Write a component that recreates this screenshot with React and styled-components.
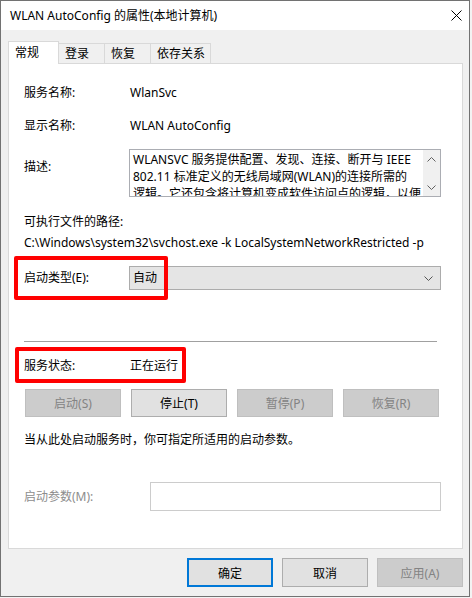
import React from "react";
import styled, { createGlobalStyle } from "styled-components";

const GlobalStyle = createGlobalStyle`
  html, body {
    margin: 0;
    padding: 0;
    background: #f3f3f3;
  }
  body {
    font-family: "Noto Sans", "Noto Sans CJK SC", sans-serif;
    font-size: 12px;
    color: #000;
  }
`;

const Window = styled.div`
  box-sizing: border-box;
  width: 470px;
  height: 597px;
  border: 1px solid #727272;
  background: #f0f0f0;
  display: flex;
  flex-direction: column;
`;

const TitleBar = styled.div`
  height: 29px;
  background: #fff;
  display: flex;
  align-items: center;
  justify-content: space-between;
  padding: 0 7px 0 9px;
`;

const Title = styled.span`
  font-size: 12px;
  line-height: 16px;
`;

const Body = styled.div`
  flex: 1;
  padding: 11px 6px 0 7px;
  display: flex;
  flex-direction: column;
`;

const TabStrip = styled.div`
  display: flex;
  align-items: flex-end;
  height: 22px;
`;

const Tab = styled.div`
  box-sizing: border-box;
  min-width: ${(p) => (p.$active ? "51px" : "47px")};
  height: ${(p) => (p.$active ? "23px" : "20px")};
  margin-bottom: ${(p) => (p.$active ? "-1px" : "0")};
  margin-left: ${(p) => (p.$first ? "0" : "-1px")};
  padding: ${(p) => (p.$active ? "3px 5px 0 6px" : "2px 5px 0 6px")};
  border: 1px solid #d9d9d9;
  border-bottom: none;
  background: ${(p) => (p.$active ? "#fff" : "#f0f0f0")};
  position: ${(p) => (p.$active ? "relative" : "static")};
  z-index: ${(p) => (p.$active ? 1 : 0)};
  line-height: 16px;
  white-space: nowrap;
`;

const Panel = styled.div`
  box-sizing: border-box;
  height: 486px;
  width: 455px;
  border: 1px solid #d9d9d9;
  background: #fff;
  padding: 19px 21px 0 15px;
  display: flex;
  flex-direction: column;
`;

const Row = styled.div`
  display: grid;
  grid-template-columns: ${(p) => p.$label || "105px"} 1fr;
  align-items: ${(p) => (p.$top ? "start" : "center")};
  margin-top: ${(p) => p.$gap || 0}px;
  position: relative;
  line-height: 20px;
`;

const Label = styled.span`
  color: ${(p) => (p.$disabled ? "#8d8d8d" : "#000")};
  margin-top: ${(p) => p.$offset || 0}px;
  white-space: nowrap;
`;

const Value = styled.span`
  padding-left: 1px;
  white-space: nowrap;
`;

const Line = styled.div`
  line-height: 20px;
  white-space: nowrap;
  margin-top: ${(p) => p.$gap || 0}px;
`;

const DescBox = styled.div`
  box-sizing: border-box;
  height: 48px;
  border: 1px solid #abadb3;
  display: flex;
  overflow: hidden;
`;

const DescText = styled.div`
  flex: 1;
  padding: 1px 0 0 3px;
  line-height: 17px;
  overflow: hidden;
  white-space: nowrap;
`;

const ScrollBar = styled.div`
  width: 17px;
  background: #f0f0f0;
  display: flex;
  flex-direction: column;
  justify-content: space-between;
  align-items: center;
  padding: 7px 0 6px;
`;

const Combo = styled.div`
  box-sizing: border-box;
  height: 24px;
  border: 1px solid #acacac;
  background: #e5e5e5;
  display: flex;
  align-items: center;
  justify-content: space-between;
  padding: 0 7px 0 3px;
`;

const Separator = styled.div`
  height: 1px;
  background: #a0a0a0;
  margin: 51px 4px 0 0;
`;

const Highlight = styled.div`
  position: absolute;
  left: ${(p) => p.$left}px;
  top: ${(p) => p.$top}px;
  width: ${(p) => p.$w}px;
  height: ${(p) => p.$h}px;
  box-sizing: border-box;
  border: 4px solid #ff0000;
  border-radius: 2px;
  pointer-events: none;
`;

const ButtonGrid = styled.div`
  display: grid;
  grid-template-columns: repeat(4, 96px);
  column-gap: 10px;
  margin: 13px 0 0 1px;
`;

const Button = styled.div`
  box-sizing: border-box;
  height: ${(p) => p.$h || 28}px;
  width: ${(p) => (p.$w ? p.$w + "px" : "auto")};
  display: flex;
  align-items: center;
  justify-content: center;
  background: ${(p) => (p.$disabled ? "#cccccc" : "#e1e1e1")};
  border: ${(p) =>
    p.$primary
      ? "2px solid #0078d7"
      : p.$disabled
      ? "1px solid #bfbfbf"
      : "1px solid #adadad"};
  color: ${(p) => (p.$disabled ? "#838383" : "#000")};
  white-space: nowrap;
`;

const ParamInput = styled.div`
  box-sizing: border-box;
  height: 29px;
  border: 1px solid #cccccc;
  background: #fff;
`;

const Footer = styled.div`
  display: flex;
  justify-content: flex-end;
  gap: 9px;
  margin-top: 9px;
`;

const Chevron = ({ up, color = "#606060" }) => (
  <svg width="9" height="5" viewBox="0 0 9 5">
    <path
      d={up ? "M0.5 4.5 L4.5 0.5 L8.5 4.5" : "M0.5 0.5 L4.5 4.5 L8.5 0.5"}
      fill="none"
      stroke={color}
      strokeWidth="1"
    />
  </svg>
);

const CloseIcon = () => (
  <svg width="11" height="11" viewBox="0 0 11 11">
    <path d="M0.5 0.5 L10.5 10.5 M10.5 0.5 L0.5 10.5" stroke="#000" strokeWidth="1" />
  </svg>
);

export default function App() {
  return (
    <>
      <GlobalStyle />
      <Window>
        <TitleBar>
          <Title>WLAN AutoConfig 的属性(本地计算机)</Title>
          <CloseIcon />
        </TitleBar>
        <Body>
          <TabStrip>
            <Tab $active $first>常规</Tab>
            <Tab>登录</Tab>
            <Tab>恢复</Tab>
            <Tab>依存关系</Tab>
          </TabStrip>
          <Panel>
            <Row>
              <Label>服务名称:</Label>
              <Value>WlanSvc</Value>
            </Row>
            <Row $gap={13}>
              <Label>显示名称:</Label>
              <Value>WLAN AutoConfig</Value>
            </Row>
            <Row $gap={13} $top>
              <Label $offset={8}>描述:</Label>
              <DescBox>
                <DescText>
                  <div>WLANSVC 服务提供配置、发现、连接、断开与 IEEE</div>
                  <div>802.11 标准定义的无线局域网(WLAN)的连接所需的</div>
                  <div>逻辑。它还包含将计算机变成软件访问点的逻辑，以便</div>
                </DescText>
                <ScrollBar>
                  <Chevron up />
                  <Chevron />
                </ScrollBar>
              </DescBox>
            </Row>
            <Line $gap={15}>可执行文件的路径:</Line>
            <Line $gap={1}>C:\Windows\system32\svchost.exe -k LocalSystemNetworkRestricted -p</Line>
            <Row $gap={13}>
              <Label>启动类型(E):</Label>
              <Combo>
                <span>自动</span>
                <Chevron color="#555" />
              </Combo>
              <Highlight $left={-10} $top={-10} $w={154} $h={44} />
            </Row>
            <Separator />
            <Row $gap={14}>
              <Label>服务状态:</Label>
              <Value>正在运行</Value>
              <Highlight $left={-9} $top={-9} $w={171} $h={36} />
            </Row>
            <ButtonGrid>
              <Button $disabled>启动(S)</Button>
              <Button>停止(T)</Button>
              <Button $disabled>暂停(P)</Button>
              <Button $disabled>恢复(R)</Button>
            </ButtonGrid>
            <Line $gap={13}>当从此处启动服务时，你可指定所适用的启动参数。</Line>
            <Row $gap={32} $label="126px">
              <Label $disabled>启动参数(M):</Label>
              <ParamInput />
            </Row>
          </Panel>
          <Footer>
            <Button $primary $w={86} $h={29}>确定</Button>
            <Button $w={86} $h={29}>取消</Button>
            <Button $disabled $w={86} $h={29}>应用(A)</Button>
          </Footer>
        </Body>
      </Window>
    </>
  );
}
